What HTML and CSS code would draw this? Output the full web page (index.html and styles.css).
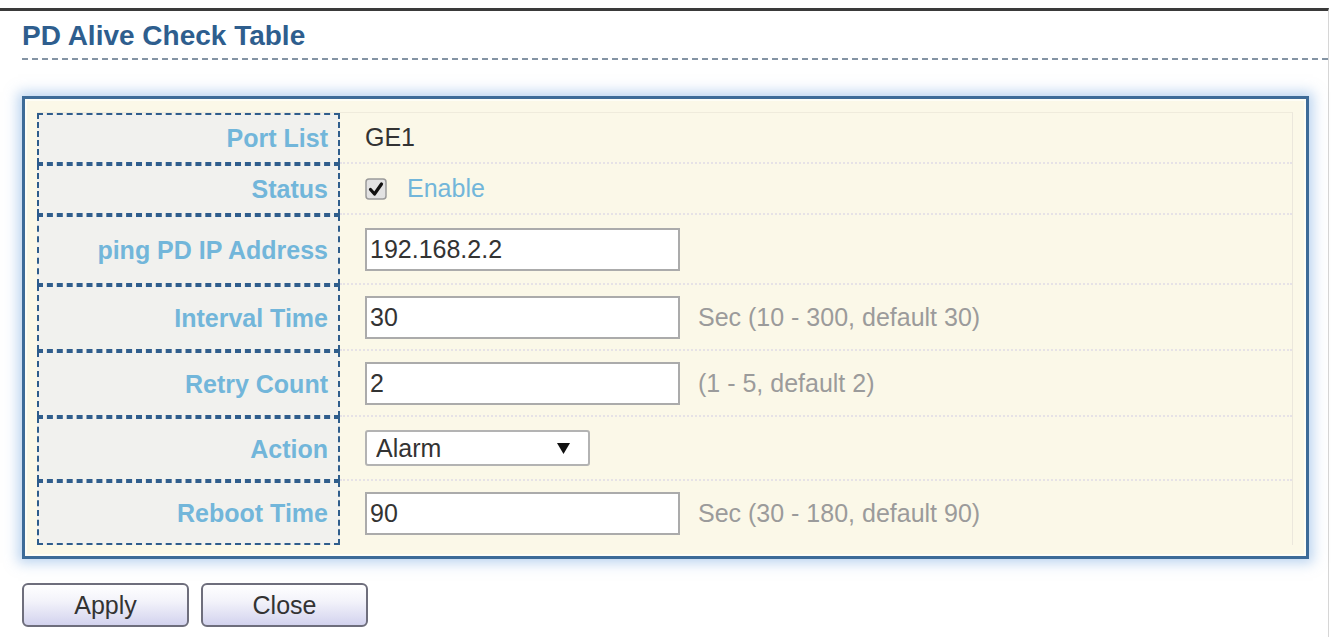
FILE: index.html
```html
<!DOCTYPE html>
<html lang="en">
<head>
    <meta charset="UTF-8">
    <title>PD Alive Check Table</title>
    <link rel="stylesheet" href="styles.css">
</head>
<body>
    <div class="frame">
        <h2 class="title">PD Alive Check Table</h2>

        <div class="panel">
            <div class="table">
                <div class="row short">
                    <div class="label">Port List</div>
                    <div class="value">GE1</div>
                </div>
                <div class="row short">
                    <div class="label">Status</div>
                    <div class="value">
                        <svg class="check" width="22" height="22" viewBox="0 0 22 22">
                            <rect x="1" y="1" width="20" height="20" rx="3" fill="#e2e2e2" stroke="#9a9a9a" stroke-width="1.5"/>
                            <path d="M5.5 11.5 L9.5 16 L16.5 6" fill="none" stroke="#111" stroke-width="3.2" stroke-linecap="round" stroke-linejoin="round"/>
                        </svg>
                        <span class="enable">Enable</span>
                    </div>
                </div>
                <div class="row tall">
                    <div class="label">ping PD IP Address</div>
                    <div class="value"><input class="field" type="text" value="192.168.2.2"></div>
                </div>
                <div class="row">
                    <div class="label">Interval Time</div>
                    <div class="value">
                        <input class="field" type="text" value="30">
                        <span class="hint">Sec (10 - 300, default 30)</span>
                    </div>
                </div>
                <div class="row">
                    <div class="label">Retry Count</div>
                    <div class="value">
                        <input class="field" type="text" value="2">
                        <span class="hint">(1 - 5, default 2)</span>
                    </div>
                </div>
                <div class="row low">
                    <div class="label">Action</div>
                    <div class="value">
                        <div class="select-wrap">
                            <select class="select">
                                <option>Alarm</option>
                                <option>Reboot</option>
                                <option>Alarm and Reboot</option>
                            </select>
                            <svg class="arrow" width="13" height="11" viewBox="0 0 13 11">
                                <path d="M0 0 H13 L6.5 11 Z" fill="#111"/>
                            </svg>
                        </div>
                    </div>
                </div>
                <div class="row low">
                    <div class="label">Reboot Time</div>
                    <div class="value">
                        <input class="field" type="text" value="90">
                        <span class="hint">Sec (30 - 180, default 90)</span>
                    </div>
                </div>
            </div>
        </div>

        <div class="buttons">
            <button class="btn">Apply</button>
            <button class="btn">Close</button>
        </div>
    </div>
</body>
</html>
```

FILE: styles.css
```css
body {
    margin: 0;
    background: #fff;
    font-family: "Liberation Sans", Arial, sans-serif;
    font-size: 25px;
    color: #333;
}
.frame {
    margin-top: 8px;
    width: 1328px;
    height: 626px;
    border-top: 3px solid #3a3a3a;
    border-right: 1px solid #d6d6d6;
}
.title {
    margin: 0 0 0 22px;
    padding: 9px 0 6px 0;
    font-size: 28px;
    line-height: 32px;
    font-weight: bold;
    color: #2e5e8e;
    border-bottom: 2px dashed #8494a4;
}
.panel {
    margin: 36px 19px 0 22px;
    padding: 13px 13px 11px 12px;
    background: #fbf8e8;
    border: 3px solid #3d6b98;
    box-shadow: 0 0 12px 4px rgba(120, 170, 225, 0.5), inset 0 0 0 2px #fdfdf6;
}
.table {
    border-top: 1px solid #efebdc;
    border-right: 1px solid #ebe7dc;
}
.row {
    display: flex;
    height: 66px;
}
.row.short { height: 51px; }
.row.tall { height: 70px; }
.row.low { height: 64px; }
.label {
    width: 303px;
    box-sizing: border-box;
    display: flex;
    align-items: center;
    justify-content: flex-end;
    padding-right: 10px;
    background: #f1f1ee;
    border: 2px dashed #2f5d8c;
    color: #72b6da;
    font-weight: bold;
}
.value {
    flex: 1;
    display: flex;
    align-items: center;
    padding-left: 25px;
    border-bottom: 2px dotted #e6e2e6;
}
.row:last-child .value { border-bottom: none; }
.check { flex: none; }
.enable {
    margin-left: 20px;
    color: #72b6da;
}
.field {
    width: 315px;
    height: 43px;
    box-sizing: border-box;
    margin: 0;
    padding: 0 3px;
    border: 2px solid #ababab;
    background: #fff;
    font-family: inherit;
    font-size: 25px;
    color: #333;
}
.hint {
    margin-left: 18px;
    color: #9b9b9b;
}
.select-wrap {
    position: relative;
    width: 225px;
    height: 36px;
}
.select {
    appearance: none;
    -webkit-appearance: none;
    width: 100%;
    height: 100%;
    box-sizing: border-box;
    margin: 0;
    padding: 0 0 0 9px;
    border: 2px solid #b3b3b3;
    border-radius: 3px;
    background: #fff;
    font-family: inherit;
    font-size: 25px;
    color: #333;
}
.arrow {
    position: absolute;
    right: 20px;
    top: 13px;
    pointer-events: none;
}
.buttons {
    display: flex;
    gap: 12px;
    margin: 24px 0 0 22px;
}
.btn {
    width: 167px;
    height: 44px;
    border: 2px solid #6e6e7c;
    border-radius: 6px;
    background: linear-gradient(#ffffff 0%, #f3f3fa 40%, #d3d3ee 100%);
    font-family: inherit;
    font-size: 25px;
    color: #333;
    cursor: pointer;
}
```
